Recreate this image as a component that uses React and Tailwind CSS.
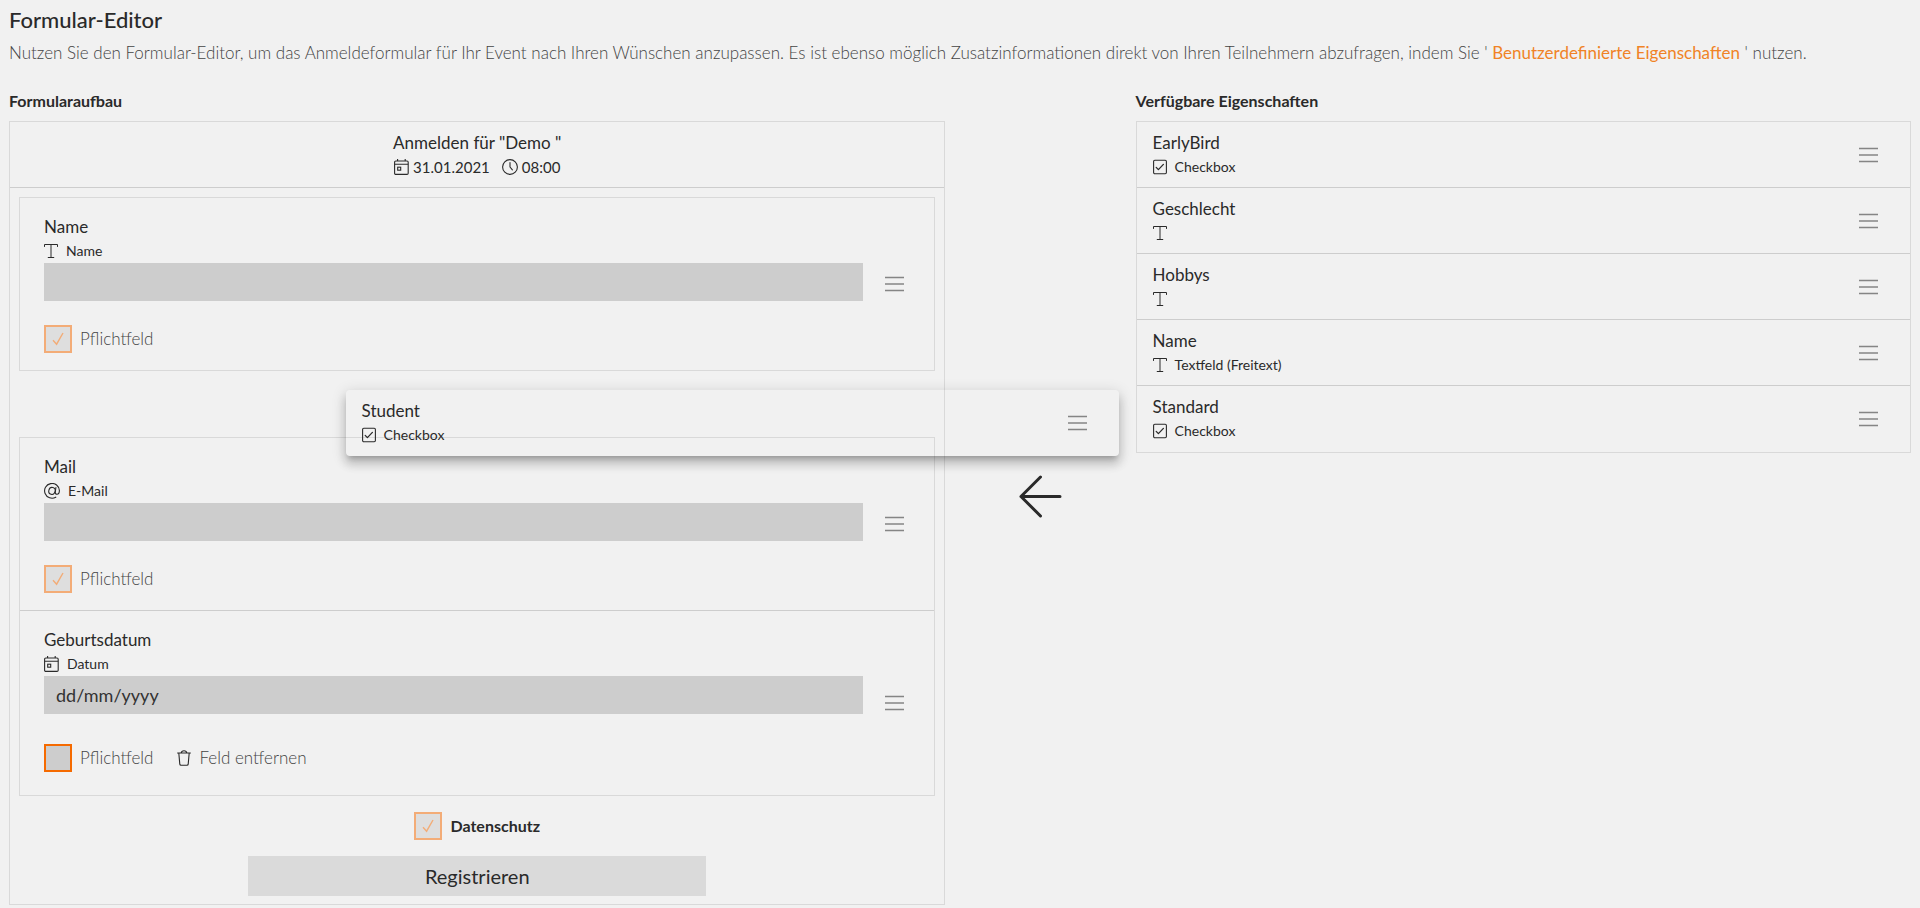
import React, { useState } from "react";

const availableProperties = [
  { id: "earlybird", title: "EarlyBird", type: "checkbox", typeLabel: "Checkbox" },
  { id: "geschlecht", title: "Geschlecht", type: "text", typeLabel: "" },
  { id: "hobbys", title: "Hobbys", type: "text", typeLabel: "" },
  { id: "name", title: "Name", type: "text", typeLabel: "Textfeld (Freitext)" },
  { id: "standard", title: "Standard", type: "checkbox", typeLabel: "Checkbox" },
];

const TextIcon = () => (
  <svg className="w-[14px] h-4 shrink-0" viewBox="0 0 14 16" fill="none" stroke="currentColor" strokeWidth="1" aria-hidden="true">
    <path d="M.5 3.5V1.5h13v2M7 1.5v13M4.2 14.5h5.6" strokeLinecap="round" />
  </svg>
);

const CheckboxIcon = () => (
  <svg className="w-[14px] h-4 shrink-0" viewBox="0 0 14 16" fill="none" stroke="currentColor" strokeWidth="1.1" aria-hidden="true">
    <rect x=".6" y="1.2" width="12.8" height="13.6" rx="1.2" />
    <path d="M3.2 8.4l2.2 2.2 5-5.2" strokeWidth="1.3" strokeLinecap="round" strokeLinejoin="round" />
  </svg>
);

const CalendarIcon = () => (
  <svg className="w-[15px] h-4 shrink-0" viewBox="0 0 15 16" fill="none" stroke="currentColor" strokeWidth="1.1" aria-hidden="true">
    <rect x=".6" y="2" width="13.6" height="13.4" rx="1.2" />
    <path d="M.6 5.2h13.6M3.6 0v2M11.2 0v2" />
    <rect x="3.7" y="8.2" width="3" height="3" />
  </svg>
);

const ClockIcon = () => (
  <svg className="w-4 h-4 shrink-0" viewBox="0 0 16 16" fill="none" stroke="currentColor" strokeWidth="1.1" aria-hidden="true">
    <circle cx="8" cy="8" r="7.4" />
    <path d="M8 3.6V8l2.4 2.8" strokeLinecap="round" strokeLinejoin="round" />
  </svg>
);

const MailIcon = () => (
  <svg className="w-4 h-4 shrink-0" viewBox="0 0 16 16" fill="none" stroke="currentColor" strokeWidth="1.1" strokeLinecap="round" aria-hidden="true">
    <path d="M11.8 14.2A7.4 7.4 0 1 1 15.4 7.6c0 2.4-.9 3.7-2.4 3.7-1.3 0-1.9-.9-1.7-2.3l.6-4.5" />
    <ellipse cx="8" cy="7.9" rx="3.2" ry="3.5" transform="rotate(15 8 7.9)" />
  </svg>
);

const TrashIcon = () => (
  <svg className="w-[14px] h-4 shrink-0" viewBox="0 0 14 16" fill="none" stroke="currentColor" strokeWidth="1.1" strokeLinecap="round" strokeLinejoin="round" aria-hidden="true">
    <path d="M.6 3h12.8M1.8 3l1 11.2c.1.7.5 1.1 1.2 1.1h6c.7 0 1.1-.4 1.2-1.1L12.2 3M4.2 2.8C4.4 1.4 5.2.7 7 .7s2.6.7 2.8 2.1" />
  </svg>
);

const ArrowIcon = () => (
  <svg className="w-[43px] h-[43px]" viewBox="0 0 43 43" fill="none" stroke="currentColor" strokeWidth="3" strokeLinecap="round" strokeLinejoin="round" aria-hidden="true">
    <path d="M41 21.5H2M21.5 2L2 21.5 21.5 41" />
  </svg>
);

const typeIcons = {
  text: TextIcon,
  checkbox: CheckboxIcon,
  date: CalendarIcon,
  mail: MailIcon,
};

const DragHandle = () => (
  <button type="button" aria-label="Verschieben" className="text-[#858585] cursor-move">
    <svg className="w-[19px] h-4" viewBox="0 0 19 16" fill="none" stroke="currentColor" strokeWidth="1.4" aria-hidden="true">
      <path d="M0 1.5h19M0 8h19M0 14.5h19" />
    </svg>
  </button>
);

const TypeLine = ({ type, label }) => {
  const Icon = typeIcons[type];
  return (
    <div className="flex items-center gap-2 h-6 text-sm">
      <Icon />
      <span>{label}</span>
    </div>
  );
};

const Checkbox = ({ label, bold, disabled, defaultChecked }) => {
  const [checked, setChecked] = useState(Boolean(defaultChecked));

  return (
    <label className="flex items-center gap-2">
      <span className={`grid ${disabled ? "opacity-50" : ""}`}>
        <input
          type="checkbox"
          checked={checked}
          disabled={disabled}
          onChange={(e) => setChecked(e.target.checked)}
          className="col-start-1 row-start-1 appearance-none w-7 h-7 bg-[#cdcdcd] border-2 border-[#f56a00]"
        />
        {checked && (
          <svg className="col-start-1 row-start-1 place-self-center w-3 h-[14px] text-[#f56a00] pointer-events-none" viewBox="0 0 12 14" fill="none" stroke="currentColor" strokeWidth="1.4" aria-hidden="true">
            <path d="M1 8.2l3.6 4L11 1" />
          </svg>
        )}
      </span>
      <span className={bold ? "font-bold text-base" : "font-light text-[#444]"}>{label}</span>
    </label>
  );
};

const FormField = ({ id, title, type, typeLabel, placeholder, required, children }) => (
  <div className="flex items-center pl-6 pr-[30px] py-[17px]">
    <div className="flex-1">
      <label htmlFor={id} className="block leading-6">{title}</label>
      <TypeLine type={type} label={typeLabel} />
      <input
        id={id}
        type="text"
        placeholder={placeholder}
        className="block w-full h-[38px] px-3 text-lg bg-[#cdcdcd] placeholder:text-[#333] placeholder:opacity-100"
      />
      <div className="flex items-center gap-6 mt-6">
        <Checkbox label="Pflichtfeld" disabled={required} defaultChecked={required} />
        {children}
      </div>
    </div>
    <div className="flex ml-[22px]">
      <DragHandle />
    </div>
  </div>
);

const PropertyItem = ({ title, type, typeLabel }) => (
  <div className="flex items-center justify-between pl-4 pr-8 py-2 h-[66px]">
    <div>
      <div className="leading-6">{title}</div>
      <TypeLine type={type} label={typeLabel} />
    </div>
    <DragHandle />
  </div>
);

const App = () => {
  return (
    <div className="relative min-h-screen bg-[#f1f1f1] text-[#2a2a2a] px-[9px] pt-2 pb-1 text-[17px] font-[Lato,sans-serif]">
      <h1 className="text-[22px] leading-6 font-medium">Formular-Editor</h1>
      <p className="mt-[9px] leading-6 font-light text-[#444]">
        Nutzen Sie den Formular-Editor, um das Anmeldeformular für Ihr Event nach Ihren Wünschen anzupassen. Es ist ebenso
        möglich Zusatzinformationen direkt von Ihren Teilnehmern abzufragen, indem Sie '{" "}
        <a href="#eigenschaften" className="font-normal text-[#f08326]">Benutzerdefinierte Eigenschaften</a> ' nutzen.
      </p>

      <div className="grid grid-cols-[936fr_190fr_775fr] mt-6">
        {/* Form structure */}
        <section>
          <h2 className="h-8 leading-6 text-base font-bold">Formularaufbau</h2>
          <div className="border border-[#d9d9d9]">
            <div className="flex flex-col items-center py-[9px] h-[66px] border-b border-[#cdcdcd]">
              <div className="leading-6">Anmelden für "Demo "</div>
              <div className="flex items-center gap-3 leading-6 text-[15px]">
                <span className="flex items-center gap-1"><CalendarIcon />31.01.2021</span>
                <span className="flex items-center gap-1"><ClockIcon />08:00</span>
              </div>
            </div>

            <form className="p-[9px] pb-2" onSubmit={(e) => e.preventDefault()}>
              <div className="border border-[#d9d9d9]">
                <FormField id="field-name" title="Name" type="text" typeLabel="Name" required />
              </div>

              {/* Gap where the dragged item can be dropped */}
              <div className="mt-[66px] border border-[#d9d9d9] divide-y divide-[#cdcdcd]">
                <FormField id="field-mail" title="Mail" type="mail" typeLabel="E-Mail" required />
                <FormField id="field-birthday" title="Geburtsdatum" type="date" typeLabel="Datum" placeholder="dd/mm/yyyy">
                  <button type="button" className="flex items-center gap-2 h-10">
                    <TrashIcon />
                    <span className="font-light text-[#444]">Feld entfernen</span>
                  </button>
                </FormField>
              </div>

              <div className="flex justify-center mt-4">
                <Checkbox label="Datenschutz" bold disabled defaultChecked />
              </div>
              <button type="submit" className="block w-1/2 h-10 mx-auto mt-4 bg-[#dadada] text-xl">
                Registrieren
              </button>
            </form>
          </div>
        </section>

        <div className="flex justify-center pt-[386px]">
          <ArrowIcon />
        </div>

        {/* Available properties */}
        <section id="eigenschaften">
          <h2 className="h-8 leading-6 text-base font-bold">Verfügbare Eigenschaften</h2>
          <div className="border border-[#d9d9d9] divide-y divide-[#cdcdcd]">
            {availableProperties.map((property) => (
              <PropertyItem key={property.id} {...property} />
            ))}
          </div>
        </section>
      </div>

      {/* Item that is being dragged */}
      <div className="absolute left-[18%] top-[390px] w-[40.3%] rounded shadow-[0_5px_5px_-3px_rgba(0,0,0,0.2),0_8px_10px_1px_rgba(0,0,0,0.14),0_3px_14px_2px_rgba(0,0,0,0.12)]">
        <PropertyItem title="Student" type="checkbox" typeLabel="Checkbox" />
      </div>
    </div>
  );
};

export default App;
